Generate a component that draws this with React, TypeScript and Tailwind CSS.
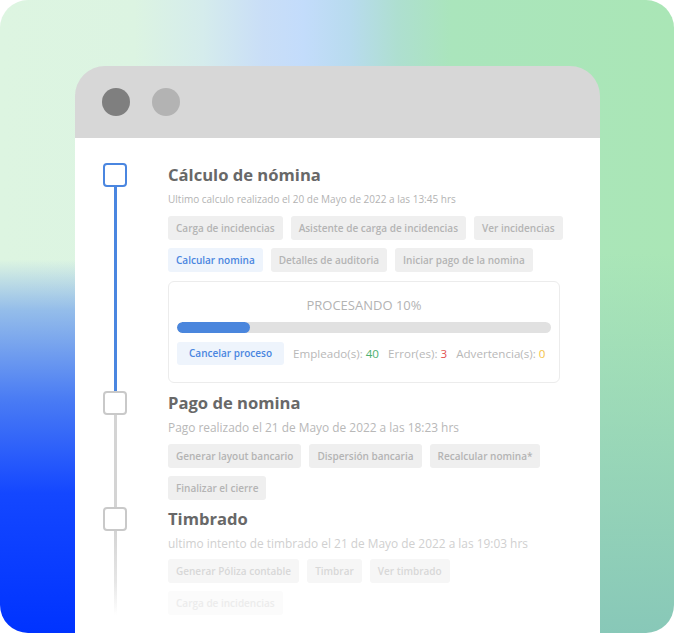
import React from "react";

type Tone = "gray" | "blue" | "faint" | "fainter";

const Btn = ({ label, tone = "gray" }: { label: string; tone?: Tone }) => {
  const toneClass =
    tone === "blue"
      ? "bg-[#eef4fc] text-[#4a86e0]"
      : tone === "faint"
        ? "bg-[#f6f6f6] text-[#d8d8d8]"
        : tone === "fainter"
          ? "bg-[#fbfbfb] text-[#ececec]"
          : "bg-[#efefef] text-[#b4b4b4]";
  return (
    <div
      className={`h-6 px-[8px] rounded-[3px] text-[10px] font-semibold flex items-center whitespace-nowrap ${toneClass}`}
    >
      {label}
    </div>
  );
};

const Step = ({
  active,
  title,
  subtitle,
  subtitleClass,
  lineClass,
  children,
}: {
  active?: boolean;
  title: string;
  subtitle: string;
  subtitleClass: string;
  lineClass: string;
  children: React.ReactNode;
}) => (
  <div className="flex">
    <div className="flex flex-col items-center w-6 shrink-0">
      <div
        className={`w-6 h-6 rounded-[4px] border-2 bg-white ${active ? "border-[#4a86e0]" : "border-[#c9c9c9]"}`}
      />
      <div className={`w-[3px] flex-1 ${lineClass}`} />
    </div>
    <div className="ml-[41px] flex-1">
      <h2 className="text-[16.6px] font-bold leading-6 text-[#686868]">
        {title}
      </h2>
      <p className={`mt-1 leading-4 whitespace-nowrap ${subtitleClass}`}>
        {subtitle}
      </p>
      {children}
    </div>
  </div>
);

export default function App() {
  return (
    <div className="w-[675px] h-[633px] bg-white overflow-hidden font-['Open_Sans',sans-serif]">
      <div className="w-[674px] h-[633px] rounded-[28px] overflow-hidden flex flex-col [background:linear-gradient(180deg,rgba(0,51,255,0)_41%,rgba(130,175,236,0.8)_49%,#4a7cf4_63%,#1447ff_78%,#0033ff_100%)_left_top/50%_100%_no-repeat,linear-gradient(180deg,rgba(136,200,184,0)_40%,#88c8b8_100%)_right_top/50%_100%_no-repeat,linear-gradient(90deg,#ddf5e1_0%,#dcf4e2_20%,#d5ecec_30%,#c9def7_39%,#c3dcfb_45%,#b8dbee_52%,#aedfd0_59%,#aae5bc_67%,#aae6b6_100%)]">
        <div className="ml-[75px] mt-[66px] w-[525px] flex-1 flex flex-col rounded-t-[30px] overflow-hidden">
          <div className="h-[72px] bg-[#d7d7d7] flex items-center pl-[27px] gap-[22px] shrink-0">
            <div className="w-7 h-7 rounded-full bg-[#7f7f7f]" />
            <div className="w-7 h-7 rounded-full bg-[#b3b3b3]" />
          </div>
          <div className="flex-1 bg-white pt-[25px] pl-[28px]">
            <Step
              active
              title="Cálculo de nómina"
              subtitle="Ultimo calculo realizado el 20 de Mayo de 2022 a las 13:45 hrs"
              subtitleClass="text-[10px] text-[#b3b3b3]"
              lineClass="bg-[#4a86e0]"
            >
              <div className="mt-[9px] flex flex-col gap-2">
                <div className="flex gap-2">
                  <Btn label="Carga de incidencias" />
                  <Btn label="Asistente de carga de incidencias" />
                  <Btn label="Ver incidencias" />
                </div>
                <div className="flex gap-2">
                  <Btn label="Calcular nomina" tone="blue" />
                  <Btn label="Detalles de auditoria" />
                  <Btn label="Iniciar pago de la nomina" />
                </div>
              </div>
              <div className="mt-[9px] mb-2 w-[392px] h-[102px] border border-[#ececec] rounded-md px-2 pt-[14px]">
                <p className="text-center text-[13px] leading-[18px] text-[#b3b3b3]">
                  PROCESANDO 10%
                </p>
                <div className="mt-[8px] h-[11px] rounded-full bg-[#e1e1e1] overflow-hidden">
                  <div className="h-full w-[19.5%] rounded-full bg-[#4a86dd]" />
                </div>
                <div className="mt-[9px] flex items-center">
                  <div className="h-[23px] px-3 rounded-[3px] bg-[#eef4fc] text-[#4a86e0] text-[10px] font-semibold flex items-center whitespace-nowrap">
                    Cancelar proceso
                  </div>
                  <div className="ml-[9px] flex gap-[9px] text-[11.6px] text-[#b8b8b8] whitespace-nowrap">
                    <span>
                      Empleado(s): <span className="text-[#4db070]">40</span>
                    </span>
                    <span>
                      Error(es): <span className="text-[#e25252]">3</span>
                    </span>
                    <span>
                      Advertencia(s): <span className="text-[#f4c347]">0</span>
                    </span>
                  </div>
                </div>
              </div>
            </Step>
            <Step
              title="Pago de nomina"
              subtitle="Pago realizado el 21 de Mayo de 2022 a las 18:23 hrs"
              subtitleClass="text-[11.9px] text-[#b8b8b8]"
              lineClass="bg-[#d4d4d4]"
            >
              <div className="mt-[9px] mb-[7px] flex flex-col gap-2">
                <div className="flex gap-2">
                  <Btn label="Generar layout bancario" />
                  <Btn label="Dispersión bancaria" />
                  <Btn label="Recalcular nomina*" />
                </div>
                <div className="flex gap-2">
                  <Btn label="Finalizar el cierre" />
                </div>
              </div>
            </Step>
            <Step
              title="Timbrado"
              subtitle="ultimo intento de timbrado el 21 de Mayo de 2022 a las 19:03 hrs"
              subtitleClass="text-[11.9px] text-[#d0d0d0]"
              lineClass="bg-[linear-gradient(180deg,#d4d4d4_0%,#e6e6e6_60%,rgba(255,255,255,0)_100%)]"
            >
              <div className="mt-[8px] flex flex-col gap-2">
                <div className="flex gap-2">
                  <Btn label="Generar Póliza contable" tone="faint" />
                  <Btn label="Timbrar" tone="faint" />
                  <Btn label="Ver timbrado" tone="faint" />
                </div>
                <div className="flex gap-2">
                  <Btn label="Carga de incidencias" tone="fainter" />
                </div>
              </div>
            </Step>
          </div>
        </div>
      </div>
    </div>
  );
}
